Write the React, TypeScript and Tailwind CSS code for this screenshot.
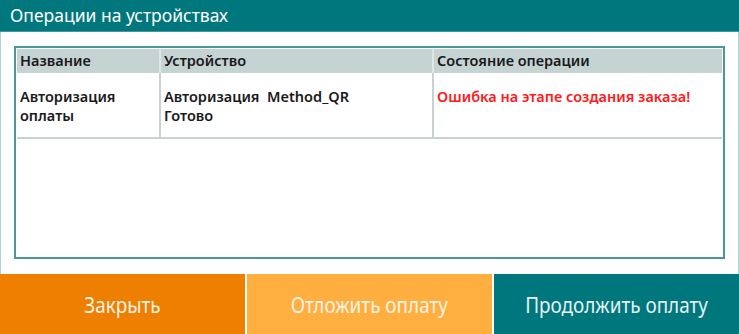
export default function App() {
  return (
    <div className="w-[739px] h-[334px] flex flex-col bg-white overflow-hidden" style={{ fontFamily: '"Noto Sans", "Open Sans", sans-serif' }}>
      <div className="h-[32px] flex items-center px-[10px] bg-[#00777d] border-b border-[#3e9aa0] text-white text-[17.5px]">
        Операции на устройствах
      </div>
      <div className="flex-1 flex flex-col border-x border-[#a9d6d8]">
        <div className="mx-[13px] mt-[14px] h-[213px] border-2 border-[#4b979c] p-px">
          <table className="w-full border-collapse text-[14.5px] font-semibold text-[#1a1a1a] table-fixed">
            <thead>
              <tr className="bg-[#c5d3d3] h-[24px] text-left">
                <th className="w-[143px] px-[3px] font-semibold border-r-2 border-[#dfe6e6]">Название</th>
                <th className="w-[273px] px-[3px] font-semibold border-r-2 border-[#dfe6e6]">Устройство</th>
                <th className="px-[3px] font-semibold">Состояние операции</th>
              </tr>
            </thead>
            <tbody>
              <tr className="h-[65px] align-top border-b-2 border-[#c8d2d2] leading-[19px]">
                <td className="px-[3px] pt-[14px] border-r-2 border-[#c8d2d2]">Авторизация<br />оплаты</td>
                <td className="px-[3px] pt-[14px] border-r-2 border-[#c8d2d2]">Авторизация&nbsp; Method_QR<br />Готово</td>
                <td className="px-[3px] pt-[14px] text-[#ff1a1a]">Ошибка на этапе создания заказа!</td>
              </tr>
            </tbody>
          </table>
        </div>
        <div className="flex-1" />
      </div>
      <div className="h-[60px] flex gap-[2px] text-[21px] text-[#fdf3e6]" style={{ fontFamily: '"Noto Sans", sans-serif' }}>
        <button className="flex-1 bg-[#ee7f00] flex items-center justify-center pt-[3px]">
          <span className="inline-block scale-x-[0.9]">Закрыть</span>
        </button>
        <button className="flex-1 bg-[#ffaf40] flex items-center justify-center pt-[3px]">
          <span className="inline-block scale-x-[0.9]">Отложить оплату</span>
        </button>
        <button className="flex-1 bg-[#00777d] flex items-center justify-center pt-[3px] text-[#e6f2f2]">
          <span className="inline-block scale-x-[0.9]">Продолжить оплату</span>
        </button>
      </div>
    </div>
  );
}
